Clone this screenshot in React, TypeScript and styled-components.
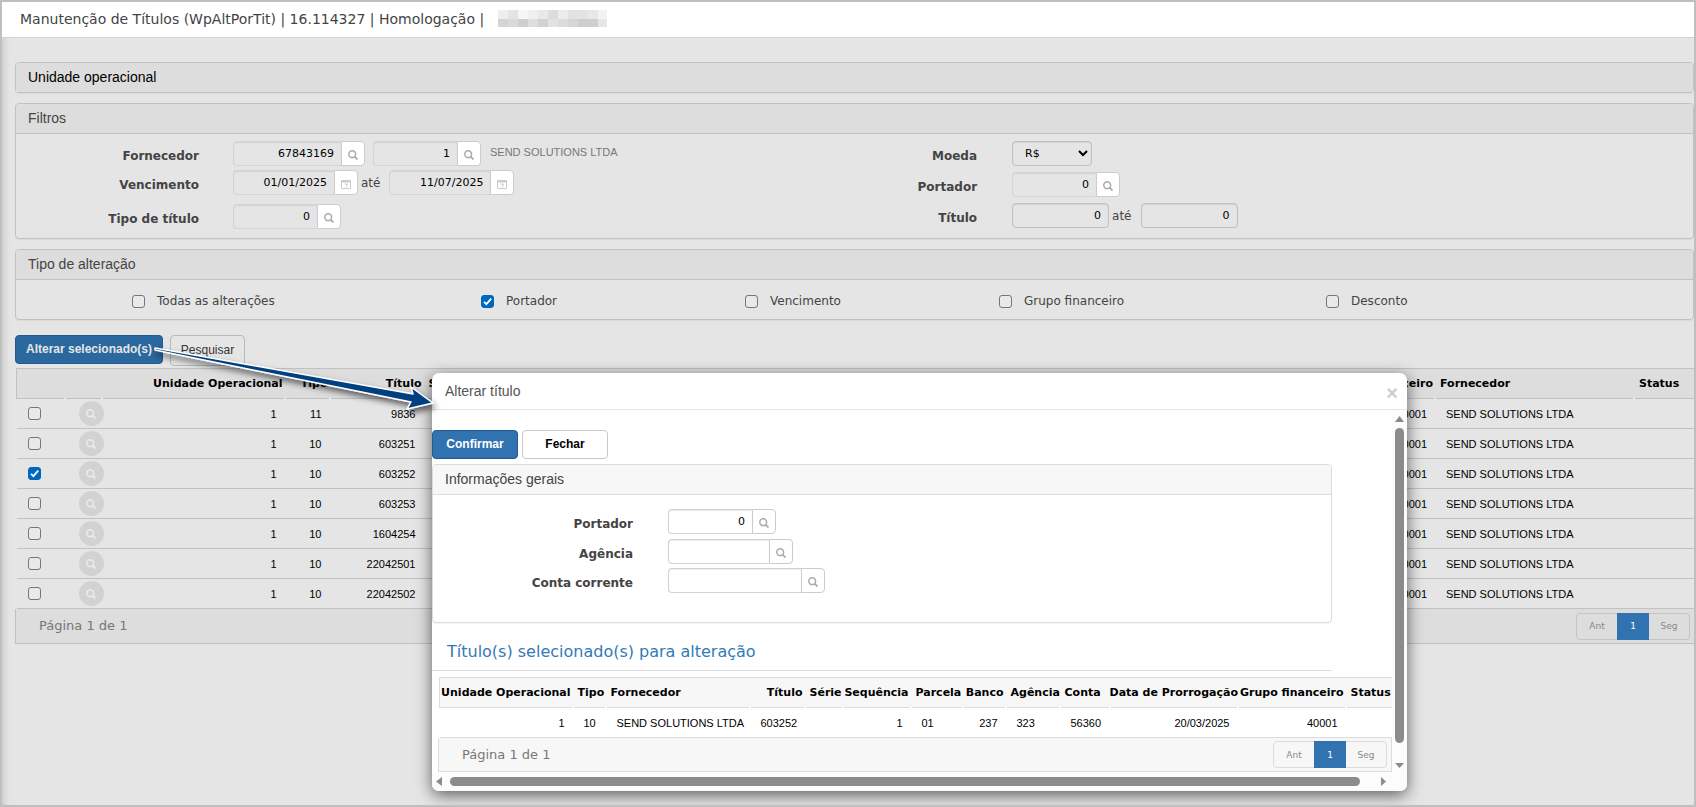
import React from "react";
import styled, { createGlobalStyle, css } from "styled-components";

const verdana = `Verdana, "DejaVu Sans", sans-serif`;
const arial = `Arial, "Liberation Sans", sans-serif`;

const Global = createGlobalStyle`
  * { box-sizing: border-box; }
  body { margin: 0; background: #e5e5e5; }
  button, input, select { font: inherit; margin: 0; }
`;

const Page = styled.div`
  position: relative;
  display: flex;
  flex-direction: column;
  min-height: 100vh;
  border: 2px solid #bfbfbf;
  background: #e5e5e5;
  box-shadow: inset 6px 0 6px -4px rgba(0, 0, 0, 0.12);
  color: #000;
  font: 12px/16px ${verdana};
  overflow: hidden;
`;

const TopBar = styled.header`
  display: flex;
  align-items: center;
  gap: 14px;
  height: 36px;
  padding: 0 0 2px 18px;
  border-bottom: 1px solid #d2d2d2;
  background: #fff;
  color: #444;
  font-size: 14px;
  line-height: 20px;
`;

const Heading = styled.h1`
  margin: 0;
  font: inherit;
`;

const Main = styled.main`
  display: flex;
  flex-direction: column;
  padding: 24px 0 0 13px;
`;

const Panel = styled.section<{ $light?: boolean }>`
  border: 1px solid ${(p) => (p.$light ? "#dcdcdc" : "#c1c1c1")};
  border-radius: 4px;
  margin-bottom: ${(p) => (p.$light ? 0 : 10)}px;
  box-shadow: 0 1px 1px rgba(0, 0, 0, 0.05);
`;

const PanelTitle = styled.h2<{ $light?: boolean; $strong?: boolean; $alone?: boolean }>`
  margin: 0;
  height: ${(p) => (p.$alone ? 29 : 30)}px;
  padding: 0 12px;
  border-bottom: ${(p) => (p.$alone ? "0" : `1px solid ${p.$light ? "#dcdcdc" : "#c1c1c1"}`)};
  border-radius: 3px 3px 0 0;
  background: ${(p) => (p.$light ? "#f7f7f7" : "#ddd")};
  color: ${(p) => (p.$strong ? "#000" : "#444")};
  font: 14px/28px ${arial};
`;

const Filters = styled.div`
  display: grid;
  grid-template-columns: minmax(0, 780fr) minmax(0, 899fr);
  padding: 7px 0 9px;
`;

const FieldColumn = styled.div`
  display: flex;
  flex-direction: column;
`;

const Field = styled.div<{ $labelWidth: number; $gap: number; $height: number }>`
  display: grid;
  grid-template-columns: ${(p) => p.$labelWidth}px 1fr;
  column-gap: ${(p) => p.$gap}px;
  height: ${(p) => p.$height}px;
  align-items: start;
`;

const FieldLabel = styled.label`
  padding-top: 7px;
  text-align: right;
  font-weight: bold;
  color: #444;
`;

const Controls = styled.div`
  display: flex;
  align-items: center;
  gap: 8px;
`;

const Until = styled.span`
  margin: 0 1px 0 -5px;
  color: #444;
`;

const Group = styled.span`
  display: inline-flex;
`;

const TextInput = styled.input<{ $width: number; $joined?: boolean; $light?: boolean }>`
  width: ${(p) => p.$width}px;
  height: 25px;
  padding: 0 7px;
  border: 1px solid ${(p) => (p.$joined && !p.$light ? "#d4d4d4" : p.$light ? "#d2d2d2" : "#bfbfbf")};
  border-radius: 4px;
  ${(p) =>
    p.$joined &&
    css`
      border-right: 0;
      border-radius: 4px 0 0 4px;
    `}
  background: transparent;
  box-shadow: inset 0 1px 1px rgba(0, 0, 0, 0.08);
  color: #000;
  font-size: 11px;
  text-align: right;
  outline: 0;
`;

const AddOn = styled.button`
  display: flex;
  align-items: center;
  justify-content: center;
  width: 24px;
  height: 25px;
  padding: 3px 0 0;
  border: 1px solid #ccc;
  border-radius: 0 4px 4px 0;
  background: #fff;
  color: #aaa;
`;

const Currency = styled.select`
  width: 80px;
  height: 25px;
  padding: 0 0 0 8px;
  border: 1px solid #bfbfbf;
  border-radius: 4px;
  background: transparent;
  box-shadow: inset 0 1px 1px rgba(0, 0, 0, 0.08);
  color: #000;
  font-size: 11px;
`;

const Supplier = styled.span`
  padding: 0 0 4px 1px;
  color: #777;
  font: 11px/16px ${arial};
`;

const Options = styled.div`
  display: grid;
  grid-template-columns: 349fr 264fr 254fr 327fr 367fr;
  padding: 13px 0 9px 116px;
`;

const Option = styled.label`
  display: flex;
  align-items: center;
  gap: 12px;
  height: 17px;
  color: #444;
`;

const OptionText = styled.span`
  padding-bottom: 2px;
`;

const Check = styled.input.attrs({ type: "checkbox" })`
  appearance: none;
  flex: none;
  width: 13px;
  height: 13px;
  border: 1px solid #767676;
  border-radius: 3px;
  background: #e9e9e9;
  &:checked {
    border-color: #0067c0;
    background: #0067c0
      url("data:image/svg+xml,%3Csvg xmlns='http://www.w3.org/2000/svg' viewBox='0 0 11 11'%3E%3Cpath d='M2 5.8 4.4 8.2 9.2 2.6' fill='none' stroke='%23fff' stroke-width='1.8'/%3E%3C/svg%3E");
  }
`;

const Actions = styled.div<{ $tight?: boolean }>`
  display: flex;
  align-items: flex-start;
  gap: ${(p) => (p.$tight ? 4 : 7)}px;
  padding: ${(p) => (p.$tight ? "20px 0 5px" : "5px 0 2px")};
`;

const Button = styled.button<{ $primary?: boolean; $dim?: boolean; $plain?: boolean; $width: number }>`
  width: ${(p) => p.$width}px;
  height: ${(p) => (p.$plain ? 31 : 29)}px;
  padding: 0 0 2px;
  border: 1px solid ${(p) => (p.$primary ? "#24598c" : p.$plain ? "#b9b9b9" : "#c8c8c8")};
  border-radius: 4px;
  background: ${(p) => (p.$primary ? (p.$dim ? "#2b689f" : "#3073b0") : p.$plain ? "transparent" : "#fff")};
  color: ${(p) => (p.$primary ? (p.$dim ? "#e5e5e5" : "#fff") : p.$plain ? "#333" : "#000")};
  font: ${(p) => (p.$plain ? "normal" : "bold")} 12px ${arial};
  white-space: nowrap;
`;

const Table = styled.table<{ $light?: boolean }>`
  table-layout: fixed;
  width: calc(100% - 1px);
  margin-left: 1px;
  border-collapse: collapse;
  --line: ${(p) => (p.$light ? "#dcdcdc" : "#c1c1c1")};
  --head: ${(p) => (p.$light ? "#f7f7f7" : "#ddd")};
  --notch: ${(p) => (p.$light ? "#fff" : "#f2f2f2")};
`;

const HeadRow = styled.tr`
  height: 30px;
  border-top: 1px solid var(--line);
  border-left: 1px solid var(--line);
  border-bottom: 1px solid var(--line);
  background: var(--head);
`;

const Row = styled.tr`
  height: 30px;
  border-bottom: 1px solid var(--line);
`;

const Th = styled.th<{ $right?: boolean }>`
  position: relative;
  padding: ${(p) => (p.$right ? "0 2px 0 0" : "0 0 0 5px")};
  text-align: ${(p) => (p.$right ? "right" : "left")};
  white-space: nowrap;
  font: bold 11px/16px ${verdana};
  &:not(:last-child)::after {
    content: "";
    position: absolute;
    right: -1px;
    bottom: -1px;
    width: 2px;
    height: 1px;
    background: var(--notch);
  }
`;

const Td = styled.td<{ $right?: boolean }>`
  padding: 0 8px 0 11px;
  text-align: ${(p) => (p.$right ? "right" : "left")};
  white-space: nowrap;
  font: 11px/16px ${arial};
`;

const CheckCell = styled.td`
  padding: 0 0 0 11px;
  line-height: 0;
`;

const IconCell = styled.td`
  padding: 0 0 0 14px;
`;

const RoundButton = styled.button`
  display: flex;
  align-items: center;
  justify-content: center;
  width: 25px;
  height: 25px;
  padding: 0;
  border: 0;
  border-radius: 50%;
  background: #d2d2d2;
  color: #ececec;
`;

const Pager = styled.footer<{ $light?: boolean }>`
  display: flex;
  align-items: center;
  justify-content: space-between;
  height: ${(p) => (p.$light ? 34 : 35)}px;
  padding: 0 4px 0 23px;
  border: solid ${(p) => (p.$light ? "#dcdcdc" : "#c1c1c1")};
  border-width: ${(p) => (p.$light ? "0 1px 1px" : "0 0 1px 1px")};
  background: ${(p) => (p.$light ? "#f7f7f7" : "#ddd")};
  color: #777;
  font-size: 13px;
`;

const Pages = styled.nav<{ $light?: boolean }>`
  display: flex;
  height: 27px;
  border: 1px solid ${(p) => (p.$light ? "#dcdcdc" : "#c4c4c4")};
  border-radius: 4px;
`;

const PageLink = styled.a<{ $current?: boolean }>`
  display: flex;
  align-items: center;
  justify-content: center;
  width: ${(p) => (p.$current ? 32 : 40)}px;
  margin: ${(p) => (p.$current ? "-1px 0" : 0)};
  background: ${(p) => (p.$current ? "#3073b0" : "transparent")};
  color: ${(p) => (p.$current ? "#fff" : "#888")};
  font-size: 9px;
  text-decoration: none;
`;

const Masked = styled.svg`
  display: block;
`;

const Arrow = styled.svg`
  position: absolute;
  z-index: 3;
  left: 148px;
  top: 338px;
  pointer-events: none;
`;

const Dialog = styled.div`
  position: absolute;
  z-index: 2;
  top: 371px;
  left: 430px;
  right: 287px;
  display: grid;
  grid-template-columns: minmax(0, 1fr) 15px;
  border-radius: 7px;
  background: #fff;
  box-shadow: 0 4px 16px rgba(0, 0, 0, 0.6);
  overflow: hidden;
`;

const DialogHead = styled.header`
  grid-column: 1 / -1;
  display: flex;
  align-items: center;
  justify-content: space-between;
  height: 37px;
  padding: 0 9px 0 13px;
  border-bottom: 1px solid #e5e5e5;
`;

const DialogTitle = styled.h2`
  margin: 0;
  color: #555;
  font: 14px/20px ${arial};
`;

const Close = styled.button`
  padding: 4px 0 0;
  border: 0;
  background: none;
  color: #ccc;
  font: bold 20px/20px ${arial};
`;

const DialogBody = styled.div`
  min-width: 0;
  overflow: hidden;
`;

const Inset = styled.div`
  margin-right: 60px;
`;

const DialogFields = styled.div`
  padding: 14px 0 27px;
`;

const Caption = styled.h3`
  margin: 0 0 6px;
  padding: 18px 15px 7px;
  border-bottom: 1px solid #dcdcdc;
  color: #337ab7;
  font: 16px/22px ${verdana};
`;

const Listing = styled.div`
  padding-left: 6px;
`;

const VBar = styled.div`
  display: flex;
  flex-direction: column;
  align-items: center;
  justify-content: space-between;
  padding: 6px 0 4px;
  background: #fcfcfc;
`;

const VThumb = styled.div`
  flex: 1;
  width: 9px;
  margin: 6px 0 20px;
  border-radius: 5px;
  background: #8b8b8b;
`;

const HBar = styled.div`
  grid-column: 1 / -1;
  display: flex;
  align-items: center;
  height: 19px;
  padding: 0 21px 0 4px;
  background: #fcfcfc;
`;

const HThumb = styled.div`
  flex: 1;
  height: 9px;
  margin: 0 21px 0 8px;
  border-radius: 5px;
  background: #8b8b8b;
`;

const Magnifier = ({ size = 10 }: { size?: number }) => (
  <svg width={size} height={size} viewBox="0 0 10 10" fill="none" stroke="currentColor" aria-hidden="true">
    <circle cx="4.2" cy="4.2" r="3.4" strokeWidth="1.5" />
    <path d="M6.600 6.600 9.500 9.500" strokeWidth="1.8" />
  </svg>
);

const Calendar = () => (
  <svg width="10" height="10" viewBox="0 0 10 10" fill="none" stroke="#ccc" aria-hidden="true">
    <path d="M.5 1.500h9v8h-9z" />
    <path d="M0 2.500h10" strokeWidth="2" />
    <path d="M3.500 5h3L5 8.500" />
  </svg>
);

const Lookup = ({ id, label, value, width, light, kind }: {
  id: string; label?: string; value: string; width: number; light?: boolean; kind?: "date";
}) => (
  <Group>
    <TextInput id={id} aria-label={label} defaultValue={value} $width={width} $joined $light={light} />
    <AddOn type="button" aria-label={kind ? "Calendário" : "Procurar"}>
      {kind ? <Calendar /> : <Magnifier />}
    </AddOn>
  </Group>
);

const Paging = ({ light }: { light?: boolean }) => (
  <Pager $light={light}>
    <span>Página 1 de 1</span>
    <Pages $light={light}>
      <PageLink href="#ant">Ant</PageLink>
      <PageLink href="#1" $current>1</PageLink>
      <PageLink href="#seg">Seg</PageLink>
    </Pages>
  </Pager>
);

const maskTones = [
  ["#eee", "#e4e4e6", "#f6f6f6", "#f0f0f0", "#e9e9e9", "#dcdde1", "#ececec", "#e2e2e2", "#e3e3e3", "#e8e8e8", "#f3f3f3"],
  ["#d4d4d4", "#dadada", "#cfcfd1", "#dedede", "#d2d2d2", "#e2e2e4", "#dcdcdc", "#d6d6d6", "#cdcdcd", "#cfcfcf", "#e6e6e6"],
];

const options = ["Todas as alterações", "Portador", "Vencimento", "Grupo financeiro", "Desconto"];

const rows = [
  ["11", "9836"],
  ["10", "603251"],
  ["10", "603252"],
  ["10", "603253"],
  ["10", "1604254"],
  ["10", "22042501"],
  ["10", "22042502"],
];

const selectedColumns: { name: string; value: string; width?: number; right?: boolean }[] = [
  { name: "Unidade Operacional", value: "1", width: 133, right: true },
  { name: "Tipo", value: "10", width: 33 },
  { name: "Fornecedor", value: "SEND SOLUTIONS LTDA", width: 144 },
  { name: "Título", value: "603252", width: 55, right: true },
  { name: "Série", value: "", width: 38 },
  { name: "Sequência", value: "1", width: 68, right: true },
  { name: "Parcela", value: "01", width: 52 },
  { name: "Banco", value: "237", width: 43, right: true },
  { name: "Agência", value: "323", width: 54 },
  { name: "Conta", value: "56360", width: 50 },
  { name: "Data de Prorrogação", value: "20/03/2025", width: 128, right: true },
  { name: "Grupo financeiro", value: "40001", width: 108, right: true },
  { name: "Status", value: "" },
];

export default function App() {
  return (
    <Page>
      <Global />
      <TopBar>
        <Heading>Manutenção de Títulos (WpAltPorTit) | 16.114327 | Homologação |</Heading>
        <Masked width="109" height="17" viewBox="0 0 109 17" aria-hidden="true">
          {maskTones.map((line, y) =>
            line.map((tone, x) => <rect key={`${x}-${y}`} x={x * 10} y={y * 9} width="10" height="9" fill={tone} />)
          )}
        </Masked>
      </TopBar>

      <Main>
        <Panel>
          <PanelTitle $strong $alone>Unidade operacional</PanelTitle>
        </Panel>

        <Panel>
          <PanelTitle>Filtros</PanelTitle>
          <Filters>
            <FieldColumn>
              <Field $labelWidth={183} $gap={34} $height={29}>
                <FieldLabel htmlFor="fornecedor">Fornecedor</FieldLabel>
                <Controls>
                  <Lookup id="fornecedor" value="67843169" width={108} />
                  <Lookup id="filial" label="Filial" value="1" width={84} />
                  <Supplier>SEND SOLUTIONS LTDA</Supplier>
                </Controls>
              </Field>
              <Field $labelWidth={183} $gap={34} $height={34}>
                <FieldLabel htmlFor="venc-de">Vencimento</FieldLabel>
                <Controls>
                  <Lookup id="venc-de" value="01/01/2025" width={101} kind="date" />
                  <Until>até</Until>
                  <Lookup id="venc-ate" label="Vencimento até" value="11/07/2025" width={101} kind="date" />
                </Controls>
              </Field>
              <Field $labelWidth={183} $gap={34} $height={25}>
                <FieldLabel htmlFor="tipo">Tipo de título</FieldLabel>
                <Controls>
                  <Lookup id="tipo" value="0" width={84} />
                </Controls>
              </Field>
            </FieldColumn>
            <FieldColumn>
              <Field $labelWidth={182} $gap={35} $height={31}>
                <FieldLabel htmlFor="moeda">Moeda</FieldLabel>
                <Controls>
                  <Currency id="moeda"><option>R$</option></Currency>
                </Controls>
              </Field>
              <Field $labelWidth={182} $gap={35} $height={31}>
                <FieldLabel htmlFor="portador">Portador</FieldLabel>
                <Controls>
                  <Lookup id="portador" value="0" width={84} />
                </Controls>
              </Field>
              <Field $labelWidth={182} $gap={35} $height={25}>
                <FieldLabel htmlFor="titulo-de">Título</FieldLabel>
                <Controls>
                  <TextInput id="titulo-de" defaultValue="0" $width={97} />
                  <Until>até</Until>
                  <TextInput id="titulo-ate" aria-label="Título até" defaultValue="0" $width={97} />
                </Controls>
              </Field>
            </FieldColumn>
          </Filters>
        </Panel>

        <Panel>
          <PanelTitle>Tipo de alteração</PanelTitle>
          <Options>
            {options.map((name) => (
              <Option key={name}>
                <Check defaultChecked={name === "Portador"} />
                <OptionText>{name}</OptionText>
              </Option>
            ))}
          </Options>
        </Panel>

        <Actions>
          <Button type="button" $primary $dim $width={148}>Alterar selecionado(s)</Button>
          <Button type="button" $plain $width={75}>Pesquisar</Button>
        </Actions>

        <Table>
          <colgroup>
            <col width="48" /><col width="37" /><col width="183" /><col width="45" /><col width="94" />
            <col width="50" /><col /><col width="140" /><col width="199" /><col width="60" />
          </colgroup>
          <thead>
            <HeadRow>
              <Th /><Th />
              <Th $right>Unidade Operacional</Th>
              <Th $right>Tipo</Th>
              <Th $right>Título</Th>
              <Th>Série</Th>
              <Th />
              <Th $right>Grupo financeiro</Th>
              <Th>Fornecedor</Th>
              <Th>Status</Th>
            </HeadRow>
          </thead>
          <tbody>
            {rows.map(([type, title]) => (
              <Row key={title}>
                <CheckCell><Check aria-label={`Selecionar ${title}`} defaultChecked={title === "603252"} /></CheckCell>
                <IconCell>
                  <RoundButton type="button" aria-label={`Detalhar ${title}`}><Magnifier /></RoundButton>
                </IconCell>
                <Td $right>1</Td>
                <Td $right>{type}</Td>
                <Td $right>{title}</Td>
                <Td /><Td />
                <Td $right>40001</Td>
                <Td>SEND SOLUTIONS LTDA</Td>
                <Td />
              </Row>
            ))}
          </tbody>
        </Table>
        <Paging />
      </Main>

      <Dialog role="dialog" aria-labelledby="dialog-title">
        <DialogHead>
          <DialogTitle id="dialog-title">Alterar título</DialogTitle>
          <Close type="button" aria-label="Fechar janela">×</Close>
        </DialogHead>
        <DialogBody>
          <Inset>
            <Actions $tight>
              <Button type="button" $primary $width={86}>Confirmar</Button>
              <Button type="button" $width={86}>Fechar</Button>
            </Actions>
            <Panel $light>
              <PanelTitle $light>Informações gerais</PanelTitle>
              <DialogFields>
                <Field $labelWidth={200} $gap={35} $height={30}>
                  <FieldLabel htmlFor="d-portador">Portador</FieldLabel>
                  <Controls><Lookup id="d-portador" value="0" width={84} light /></Controls>
                </Field>
                <Field $labelWidth={200} $gap={35} $height={29}>
                  <FieldLabel htmlFor="d-agencia">Agência</FieldLabel>
                  <Controls><Lookup id="d-agencia" value="" width={101} light /></Controls>
                </Field>
                <Field $labelWidth={200} $gap={35} $height={27}>
                  <FieldLabel htmlFor="d-conta">Conta corrente</FieldLabel>
                  <Controls><Lookup id="d-conta" value="" width={133} light /></Controls>
                </Field>
              </DialogFields>
            </Panel>
            <Caption>Título(s) selecionado(s) para alteração</Caption>
          </Inset>
          <Listing>
            <Table $light>
              <colgroup>
                {selectedColumns.map((c) => <col key={c.name} width={c.width} />)}
              </colgroup>
              <thead>
                <HeadRow>
                  {selectedColumns.map((c) => <Th key={c.name} $right={c.right}>{c.name}</Th>)}
                </HeadRow>
              </thead>
              <tbody>
                <Row>
                  {selectedColumns.map((c) => <Td key={c.name} $right={c.right}>{c.value}</Td>)}
                </Row>
              </tbody>
            </Table>
            <Paging light />
          </Listing>
        </DialogBody>
        <VBar aria-hidden="true">
          <svg width="9" height="6" viewBox="0 0 9 6"><path d="M0 6 4.500 0 9 6z" fill="#8b8b8b" /></svg>
          <VThumb />
          <svg width="9" height="5" viewBox="0 0 9 5"><path d="M0 0h9L4.500 5z" fill="#8b8b8b" /></svg>
        </VBar>
        <HBar aria-hidden="true">
          <svg width="6" height="9" viewBox="0 0 6 9"><path d="M6 0v9L0 4.500z" fill="#8b8b8b" /></svg>
          <HThumb />
          <svg width="5" height="9" viewBox="0 0 5 9"><path d="M0 0v9l5-4.500z" fill="#8b8b8b" /></svg>
        </HBar>
      </Dialog>

      <Arrow width="300" height="90" viewBox="150 340 300 90" aria-hidden="true">
        <defs>
          <filter id="lift" x="-10%" y="-30%" width="120%" height="170%">
            <feDropShadow dx="2" dy="4" stdDeviation="3" floodOpacity="0.6" />
          </filter>
        </defs>
        <path
          d="M155 348 413 394 411 387 433 403 407 409 411 402 155 350z"
          fill="#004080" stroke="#fff" strokeWidth="1.5" strokeLinejoin="round" filter="url(#lift)"
        />
      </Arrow>
    </Page>
  );
}
